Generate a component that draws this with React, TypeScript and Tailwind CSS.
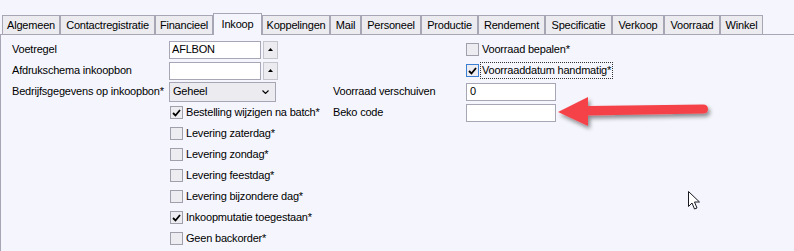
import type { ReactNode } from "react";

const tabs = [
  { label: "Algemeen", w: "w-[58px]" },
  { label: "Contactregistratie", w: "w-[95px]" },
  { label: "Financieel", w: "w-[58px]" },
  { label: "Inkoop", w: "w-[49px]", active: true },
  { label: "Koppelingen", w: "w-[68px]" },
  { label: "Mail", w: "w-[31px]" },
  { label: "Personeel", w: "w-[60px]" },
  { label: "Productie", w: "w-[57px]" },
  { label: "Rendement", w: "w-[67px]" },
  { label: "Specificatie", w: "w-[67px]" },
  { label: "Verkoop", w: "w-[52px]" },
  { label: "Voorraad", w: "w-[56px]" },
  { label: "Winkel", w: "w-[43px]" },
];

const leveringen = [
  { label: "Levering zaterdag*", checked: false },
  { label: "Levering zondag*", checked: false },
  { label: "Levering feestdag*", checked: false },
  { label: "Levering bijzondere dag*", checked: false },
  { label: "Inkoopmutatie toegestaan*", checked: true },
  { label: "Geen backorder*", checked: false },
];

export default function App() {
  return (
    <div className="relative h-[251px] w-[794px] overflow-hidden bg-[#f5f6fd] text-[11px] leading-none tracking-[-0.2px] text-black [font-family:'Liberation_Sans',Arial,sans-serif]">
      <div className="flex items-end pl-[2px] pt-[13px]">
        {tabs.map((tab) =>
          tab.active ? (
            <div
              key={tab.label}
              className={`${tab.w} relative z-10 -mb-px flex h-[22px] items-center justify-center border border-b-0 border-[#a6a6b4] bg-[#f5f6fd] pb-[1px]`}
            >
              {tab.label}
            </div>
          ) : (
            <div
              key={tab.label}
              className={`${tab.w} flex h-[19px] items-center justify-center border border-b-0 border-[#a6a6b4] bg-[#ebebf0] pt-[1px]`}
            >
              {tab.label}
            </div>
          )
        )}
      </div>

      <div className="h-full border-l border-t border-[#a6a6b4] pl-[11px] pt-[4px]">
        <div className="grid grid-cols-[157px_164px_133px_1fr] auto-rows-[21px] items-center">
          <Label>Voetregel</Label>
          <LookupField value="AFLBON" />
          <div />
          <Check label="Voorraad bepalen*" />

          <Label>Afdrukschema inkoopbon</Label>
          <LookupField value="" />
          <div />
          <Check label="Voorraaddatum handmatig*" checked focused />

          <Label>Bedrijfsgegevens op inkoopbon*</Label>
          <div className="flex h-[20px] w-[107px] items-center justify-between border border-[#a6a6b4] bg-[#ebebf0] pl-[3px] pr-[6px]">
            <span>Geheel</span>
            <svg width="7" height="4" viewBox="0 0 7 4">
              <path d="M0.5 0.5 L3.5 3.5 L6.5 0.5" fill="none" stroke="#000" strokeWidth="1.1" />
            </svg>
          </div>
          <Label>Voorraad verschuiven</Label>
          <TextField value="0" />

          <div />
          <Check label="Bestelling wijzigen na batch*" checked indent />
          <Label>Beko code</Label>
          <TextField value="" />

          {leveringen.map((item) => (
            <Row key={item.label}>
              <div />
              <Check label={item.label} checked={item.checked} indent />
              <div />
              <div />
            </Row>
          ))}
        </div>
      </div>

      {/* annotation arrow */}
      <svg className="absolute left-[552px] top-[92px]" width="170" height="42" viewBox="0 0 170 42">
        <defs>
          <filter id="arrowShadow" x="-10%" y="-30%" width="130%" height="180%">
            <feGaussianBlur in="SourceAlpha" stdDeviation="2" />
            <feOffset dx="2" dy="3" result="blur" />
            <feComponentTransfer>
              <feFuncA type="linear" slope="0.45" />
            </feComponentTransfer>
            <feMerge>
              <feMergeNode />
              <feMergeNode in="SourceGraphic" />
            </feMerge>
          </filter>
        </defs>
        <g filter="url(#arrowShadow)">
          <path
            d="M6 20 L36 5 L36 14 L151 12.5 Q156 12.5 156 17 Q156 21.5 151 21.5 L36 23.5 L36 34 Z"
            fill="#f5434a"
          />
        </g>
      </svg>

      {/* mouse cursor */}
      <svg className="absolute left-[688px] top-[191px]" width="13" height="20" viewBox="0 0 13 20">
        <path
          d="M0.5 0.5 L0.5 15.5 L4 12 L6.5 18 L9 17 L6.5 11 L11.5 11 Z"
          fill="#fff"
          stroke="#1a1a24"
          strokeWidth="1"
          strokeLinejoin="round"
        />
      </svg>
    </div>
  );
}

function Row({ children }: { children: ReactNode }) {
  return <>{children}</>;
}

function Label({ children }: { children: ReactNode }) {
  return <div className="whitespace-nowrap">{children}</div>;
}

function TextField({ value }: { value: string }) {
  return (
    <div className="flex h-[18px] w-[90px] items-center border border-[#a6a6b4] bg-white pl-[3px]">{value}</div>
  );
}

function LookupField({ value }: { value: string }) {
  return (
    <div className="flex items-center gap-[2px]">
      <div className="flex h-[18px] w-[92px] items-center border border-[#a6a6b4] bg-white pl-[2px]">{value}</div>
      <div className="flex h-[18px] w-[15px] items-center justify-center border border-[#c4c4cc] bg-[#ebebf0]">
        <svg width="5" height="3" viewBox="0 0 5 3">
          <path d="M2.5 0 L5 3 L0 3 Z" fill="#000" />
        </svg>
      </div>
    </div>
  );
}

function Check({
  label,
  checked = false,
  focused = false,
  indent = false,
}: {
  label: string;
  checked?: boolean;
  focused?: boolean;
  indent?: boolean;
}) {
  return (
    <div className={`flex items-center whitespace-nowrap ${indent ? "pl-px" : ""}`}>
      <div
        className={`flex h-[13px] w-[13px] shrink-0 items-center justify-center border ${
          focused ? "border-[#3b7fd4]" : "border-[#a0a0ac]"
        } bg-[#ededf1]`}
      >
        {checked && (
          <svg width="9" height="8" viewBox="0 0 9 8">
            <path d="M1 4 L3.5 6.5 L8 1" fill="none" stroke="#000" strokeWidth="1.8" />
          </svg>
        )}
      </div>
      <span
        className={`ml-[2px] px-[1px] py-[2px] ${
          focused ? "outline outline-1 outline-dotted outline-[#333]" : ""
        }`}
      >
        {label}
      </span>
    </div>
  );
}
